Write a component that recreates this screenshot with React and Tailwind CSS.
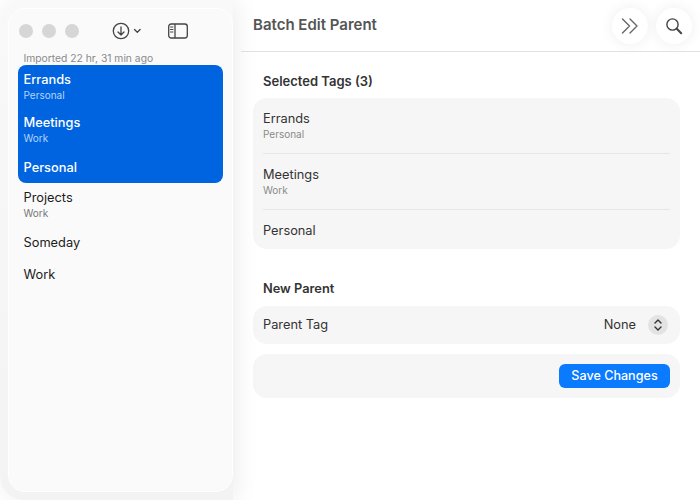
import React from "react";

const sidebarItems = [
  { name: "Errands", parent: "Personal" },
  { name: "Meetings", parent: "Work" },
  { name: "Personal" },
];
const otherItems = [
  { name: "Projects", parent: "Work" },
  { name: "Someday" },
  { name: "Work" },
];

function SidebarRow({ item, selected }) {
  return (
    <div className={`flex flex-col px-[6px] ${item.parent ? "h-[43px] pt-[6px]" : "h-[32px] justify-center pt-[2px]"}`}>
      <div className={`text-[12.8px] leading-[18px] ${selected ? "font-medium text-white" : "text-[#1c1c1c]"}`}>{item.name}</div>
      {item.parent && (
        <div className={`text-[10px] leading-[14px] mt-[-1px] ${selected ? "text-[#b5d3fa]" : "text-[#777777]"}`}>{item.parent}</div>
      )}
    </div>
  );
}

function TagRow({ name, parent, last }) {
  return (
    <div className={`mx-[10px] flex flex-col ${parent ? "h-[56px] pt-[12px]" : "h-[39px] pt-[12px]"} ${last ? "" : "border-b border-[#e6e6e6]"}`}>
      <div className="text-[12.8px] leading-[18px] text-[#333333]">{name}</div>
      {parent && <div className="text-[10px] leading-[14px] mt-[-1px] text-[#8a8a8a]">{parent}</div>}
    </div>
  );
}

export default function App() {
  return (
    <div className="relative flex h-[500px] w-[700px] overflow-hidden bg-white font-['Inter',sans-serif] antialiased">
      {/* sidebar */}
      <div className="relative z-10 h-[500px] w-[241px] shrink-0 pl-[8px] pt-[8px]">
        <div className="absolute left-0 top-0 h-[500px] w-[233px] rounded-l-[24px] bg-gradient-to-b from-[#f9f9f9] to-[#f3f3f3] shadow-[3px_0_24px_rgba(0,0,0,0.08)]" />
        <div className="relative h-[484px] w-[224.5px] rounded-[17px] border-[1.5px] border-white bg-[#fafafa] px-[8.5px]">
          <div className="flex h-[44px] items-center">
            <div className="flex gap-[9px] pl-[1.5px]">
              <span className="h-[14px] w-[14px] rounded-full bg-[#d6d6d6]" />
              <span className="h-[14px] w-[14px] rounded-full bg-[#d6d6d6]" />
              <span className="h-[14px] w-[14px] rounded-full bg-[#d6d6d6]" />
            </div>
            <svg className="ml-[33px]" width="32" height="18" viewBox="0 0 32 18" fill="none" stroke="#444444" strokeWidth="1.3" strokeLinecap="round" strokeLinejoin="round">
              <circle cx="9" cy="9" r="7.7" />
              <path d="M9 5v8M6 10l3 3 3-3" />
              <path d="M22.5 7.5l2.8 2.8 2.8-2.8" />
            </svg>
            <svg className="ml-[24px]" width="20" height="16" viewBox="0 0 20 16" fill="none" stroke="#444444" strokeWidth="1.3">
              <rect x="0.7" y="1" width="18.6" height="14" rx="2.5" />
              <path d="M7 1v14" />
              <path d="M2.5 4h2.5M2.5 6.5h2.5M2.5 9h2.5" strokeLinecap="round" strokeWidth="1" />
            </svg>
          </div>
          <div className="ml-[6px] mt-[-1px] h-[13px] text-[10.3px] leading-[13px] text-[#8a8a8a]">Imported 22 hr, 31 min ago</div>
          <div className="rounded-[8px] bg-[#0064e1]">
            {sidebarItems.map((item) => (
              <SidebarRow key={item.name} item={item} selected />
            ))}
          </div>
          {otherItems.map((item) => (
            <SidebarRow key={item.name} item={item} />
          ))}
        </div>
      </div>

      {/* main */}
      <div className="relative flex min-w-0 flex-1 flex-col">
        <div className="flex h-[52px] shrink-0 items-center justify-between border-b border-[#e2e2e2] pl-[12px] pr-[8px]">
          <div className="text-[15px] font-semibold text-[#555555]">Batch Edit Parent</div>
          <div className="flex gap-[8px]">
            <div className="flex h-[36px] w-[36px] items-center justify-center rounded-full bg-white shadow-[0_0_14px_rgba(0,0,0,0.07)]">
              <svg width="18" height="16" viewBox="0 0 18 16" fill="none" stroke="#666666" strokeWidth="1.4" strokeLinecap="round" strokeLinejoin="round">
                <path d="M1.5 1l7 7-7 7M9 1l7 7-7 7" />
              </svg>
            </div>
            <div className="flex h-[36px] w-[36px] items-center justify-center rounded-full bg-white shadow-[0_0_14px_rgba(0,0,0,0.07)]">
              <svg width="18" height="18" viewBox="0 0 18 18" fill="none" stroke="#444444" strokeLinecap="round">
                <circle cx="7.5" cy="7.5" r="5.6" strokeWidth="1.4" />
                <path d="M11.8 11.8l4.4 4.4" strokeWidth="2" />
              </svg>
            </div>
          </div>
        </div>

        <div className="flex flex-col pl-[12px] pr-[20px]">
          <div className="mt-[20px] h-[18px] pl-[10px] text-[13px] leading-[18px] font-semibold text-[#333333]">Selected Tags (3)</div>
          <div className="mt-[8px] rounded-[14px] bg-[#f6f6f6]">
            <TagRow name="Errands" parent="Personal" />
            <TagRow name="Meetings" parent="Work" />
            <TagRow name="Personal" last />
          </div>
          <div className="mt-[31px] h-[18px] pl-[10px] text-[12.8px] leading-[18px] font-semibold text-[#333333]">New Parent</div>
          <div className="mt-[8px] flex h-[38px] items-center justify-between rounded-[14px] bg-[#f6f6f6] pl-[10px] pr-[12px]">
            <div className="text-[12.8px] text-[#333333]">Parent Tag</div>
            <div className="flex items-center gap-[12px]">
              <div className="text-[12.8px] text-[#333333]">None</div>
              <div className="flex h-[20px] w-[20px] items-center justify-center rounded-full bg-[#e3e3e3]">
                <svg width="10" height="14" viewBox="0 0 10 14" fill="none" stroke="#333333" strokeWidth="1.4" strokeLinecap="round" strokeLinejoin="round">
                  <path d="M2 5l3-3 3 3M2 9l3 3 3-3" />
                </svg>
              </div>
            </div>
          </div>
          <div className="mt-[10px] flex h-[44px] items-center justify-end rounded-[14px] bg-[#f6f6f6] pr-[10px]">
            <button className="h-[24px] w-[111px] rounded-[6px] bg-[#0a7aff] text-[12.6px] font-medium text-white">Save Changes</button>
          </div>
        </div>
      </div>
    </div>
  );
}
